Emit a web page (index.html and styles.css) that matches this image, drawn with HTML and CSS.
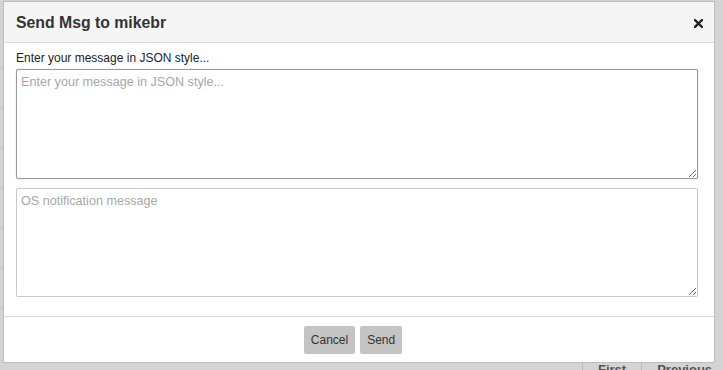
FILE: index.html
```html
<!DOCTYPE html>
<html>
<head>
<meta charset="utf-8">
<link rel="stylesheet" href="styles.css">
</head>
<body>
<div class="page">
  <div class="rows">
    <div class="row"></div><div class="row"></div><div class="row"></div><div class="row"></div>
    <div class="row"></div><div class="row"></div><div class="row"></div>
  </div>
  <div class="pager">
    <span class="pg sep">First</span>
    <span class="pg sep">Previous</span>
  </div>
</div>
<div class="modal">
  <div class="modal-header">
    <h3 class="title">Send Msg to mikebr</h3>
    <span class="close"><svg width="9" height="9" viewBox="0 0 9 9"><path d="M1 1L8 8M8 1L1 8" stroke="#222" stroke-width="2.4" stroke-linecap="square"/></svg></span>
  </div>
  <div class="modal-body">
    <label class="label">Enter your message in JSON style...</label>
    <textarea class="ta focus" placeholder="Enter your message in JSON style..."></textarea>
    <textarea class="ta second" placeholder="OS notification message"></textarea>
  </div>
  <div class="modal-footer">
    <button class="btn">Cancel</button>
    <button class="btn">Send</button>
  </div>
</div>
</body>
</html>
```
FILE: styles.css
```css
html, body {
  margin: 0;
  padding: 0;
  width: 723px;
  height: 370px;
  overflow: hidden;
  background: #d4d4d4;
  font-family: "Liberation Sans", Arial, sans-serif;
}
.page {
  position: relative;
  width: 723px;
  height: 370px;
}
.rows {
  display: flex;
  flex-direction: column;
  padding-top: 29px;
}
.row {
  height: 39px;
  border-bottom: 1px solid #c6c6c6;
  width: 10px;
}
.pager {
  position: absolute;
  left: 582px;
  top: 358px;
  display: flex;
  font-size: 13px;
  font-weight: bold;
  color: #555;
}
.pg {
  padding: 4px 15px 0 15px;
  border-left: 1px solid #bbb;
}
.modal {
  position: absolute;
  left: 3px;
  top: 1px;
  width: 710px;
  height: 360px;
  background: #fff;
  border: 1px solid #bdbdbd;
  display: flex;
  flex-direction: column;
}
.modal-header {
  height: 40px;
  background: #f5f5f5;
  border-bottom: 1px solid #d9d9d9;
  display: flex;
  align-items: center;
  justify-content: space-between;
  padding: 0 11px 0 12px;
  flex: none;
}
.title {
  margin: 0;
  font-size: 15.8px;
  font-weight: bold;
  color: #333;
  padding-top: 2px;
}
.close {
  display: flex;
  padding-top: 3px;
}
.modal-body {
  display: flex;
  flex-direction: column;
  padding: 8px 17px 0 12px;
  flex: 1;
  border-bottom: 1px solid #d9d9d9;
}
.label {
  font-size: 12px;
  color: #222;
  line-height: 15px;
  margin-bottom: 3px;
}
.ta {
  box-sizing: border-box;
  width: 682px;
  height: 110px;
  margin: 0;
  border: 1px solid #c9c9c9;
  border-radius: 2px;
  padding: 5px 4px;
  font-family: "Liberation Sans", Arial, sans-serif;
  font-size: 12.6px;
  resize: vertical;
  outline: none;
  background: #fff;
}
.ta::placeholder {
  color: #a8a8a8;
}
.ta.focus {
  border-color: #9a9a9a;
  box-shadow: 0 0 1px #aaa;
}
.ta.second {
  margin-top: 9px;
  height: 109px;
}
.modal-footer {
  height: 45px;
  display: flex;
  align-items: center;
  justify-content: center;
  gap: 5px;
  padding-right: 12px;
  flex: none;
}
.btn {
  height: 28px;
  border: none;
  border-radius: 2px;
  background: #c4c4c4;
  color: #333;
  font-family: "Liberation Sans", Arial, sans-serif;
  font-size: 12px;
  padding: 0 7px;
  margin-top: 1px;
}
```
